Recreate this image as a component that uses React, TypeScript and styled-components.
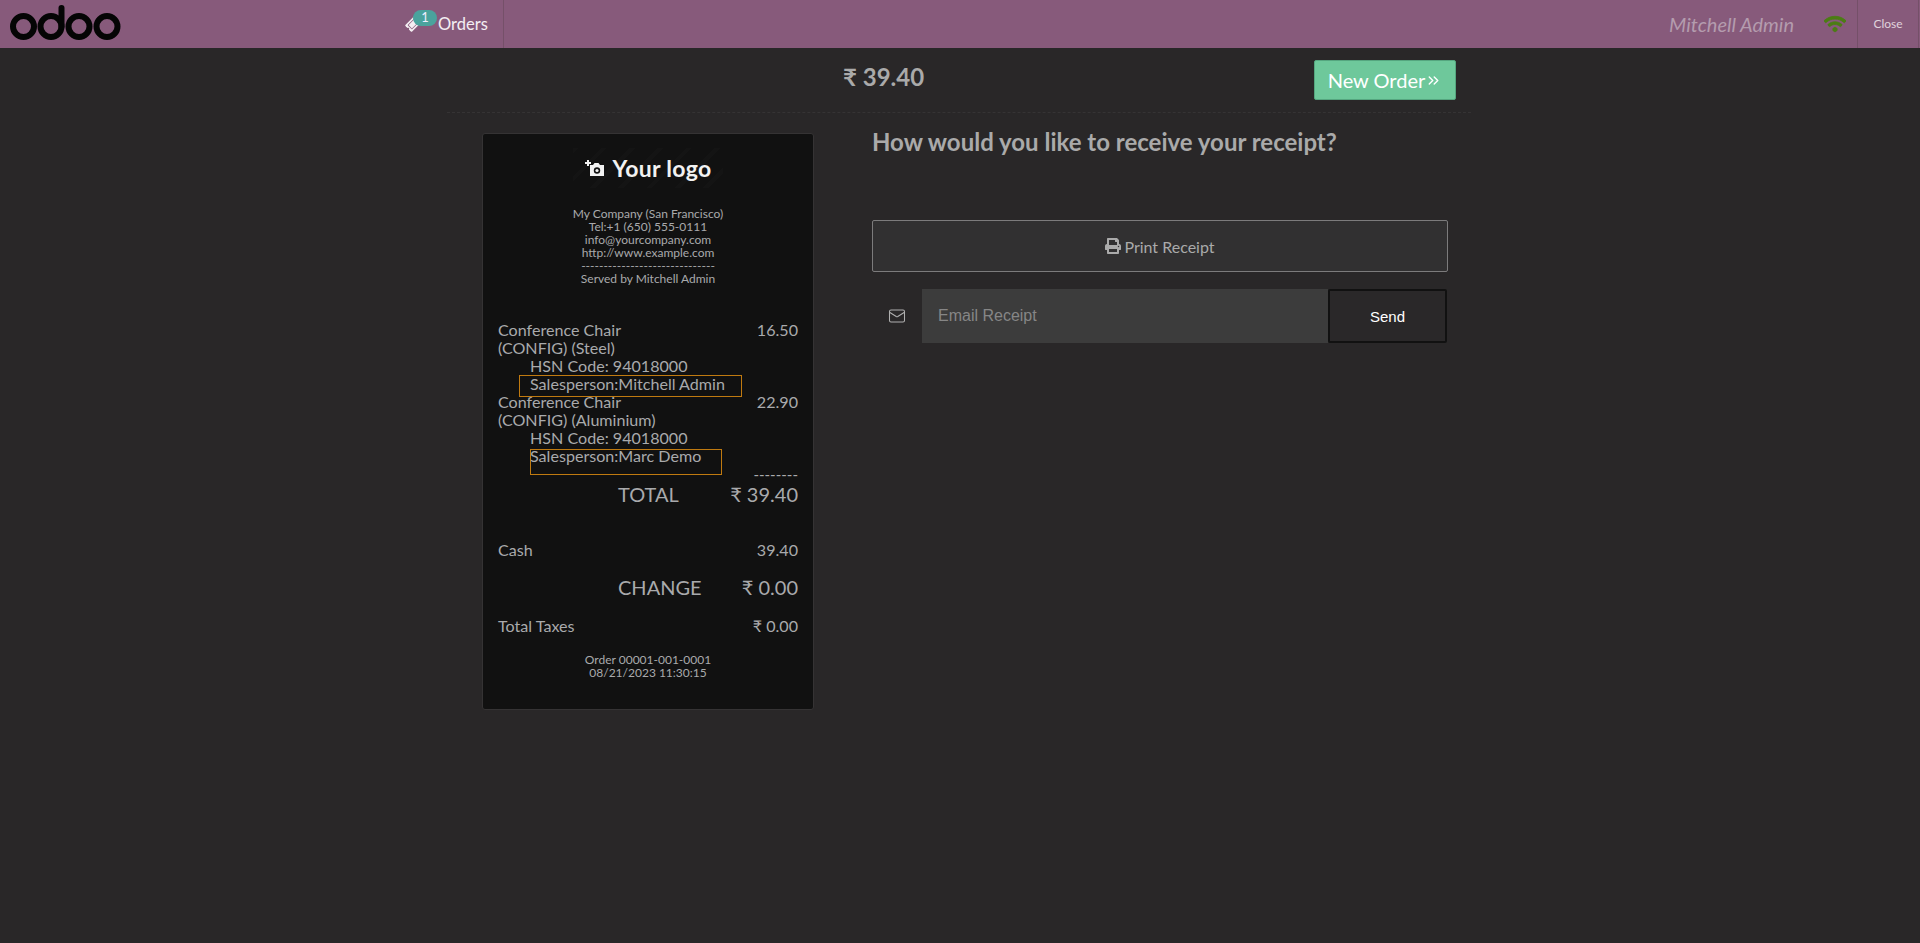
import { createGlobalStyle, styled } from "styled-components";
import { FaPrint, FaTicketAlt, FaWifi } from "react-icons/fa";
import { ChevronsRight, Mail } from "lucide-react";

const GlobalStyle = createGlobalStyle`
  html, body {
    margin: 0;
    padding: 0;
    height: 100%;
    background-color: #292728;
    font-family: Lato, "Liberation Sans", sans-serif;
    overflow: hidden;
  }
  * {
    box-sizing: border-box;
  }
`;

const Wrapper = styled.div`
  height: 943px;
  background-color: #292728;
  display: flex;
  flex-direction: column;
`;

const Navbar = styled.div`
  height: 48px;
  flex-shrink: 0;
  background-color: #875a7b;
  display: flex;
  align-items: stretch;
  color: white;
`;

const LogoBox = styled.div`
  width: 405px;
  padding: 5px 0 0 10px;
`;

const OrdersTab = styled.div`
  width: 99px;
  border-right: 1px solid #755069;
  position: relative;
  display: flex;
  align-items: center;
  gap: 18px;
  font-size: 16.5px;
  color: #f4eef2;
  svg {
    transform: rotate(-45deg);
    margin-left: 1px;
  }
`;

const Badge = styled.span`
  position: absolute;
  left: 8px;
  top: 10px;
  width: 24px;
  height: 16px;
  border-radius: 8px;
  background-color: #4aa39d;
  font-size: 13px;
  line-height: 14px;
  text-align: center;
  color: #eef;
`;

const Spacer = styled.div`
  flex: 1;
`;

const UserName = styled.div`
  align-self: center;
  font-style: italic;
  font-size: 20px;
  color: #b49cae;
  margin-right: 30px;
`;

const WifiBox = styled.div`
  width: 33px;
  display: flex;
  align-items: center;
  color: #4b7d13;
  font-size: 22px;
  svg {
    stroke: currentColor;
    stroke-width: 24px;
  }
`;

const CloseTab = styled.div`
  width: 62px;
  margin-right: 1px;
  border-left: 1px solid #755069;
  border-right: 1px solid #755069;
  display: flex;
  align-items: center;
  justify-content: center;
  font-size: 12px;
  color: #e0d4dd;
  padding-bottom: 1px;
`;

const Screen = styled.div`
  width: 1024px;
  margin-left: 447px;
`;

const TopBar = styled.div`
  height: 65px;
  border-bottom: 1px dashed #353334;
  display: flex;
  align-items: flex-start;
`;

const Amount = styled.div`
  margin-left: 396px;
  margin-top: 14px;
  font-size: 24px;
  line-height: 29px;
  font-weight: 700;
  color: #aaa;
`;

const NextButton = styled.div`
  margin-left: auto;
  margin-right: 15px;
  margin-top: 12px;
  width: 142px;
  height: 40px;
  background-color: #6ec89b;
  border: 1px solid #55a67f;
  border-radius: 2px;
  color: #fff;
  font-size: 20px;
  display: flex;
  align-items: center;
  justify-content: center;
`;

const Body = styled.div`
  display: flex;
  padding: 14px 0 0 35px;
  align-items: flex-start;
`;

const Receipt = styled.div`
  width: 332px;
  height: 577px;
  margin-top: 6px;
  background-color: #111;
  border: 1px solid #353334;
  border-radius: 3px;
  padding: 14px 15px 0;
  color: #a9aaac;
  font-size: 16.1px;
  line-height: 18px;
  flex-shrink: 0;
`;

const LogoPlaceholder = styled.div`
  width: 150px;
  height: 40px;
  margin: 0 auto 19px;
  display: flex;
  align-items: center;
  justify-content: center;
  gap: 8px;
  color: #f2f2f2;
  font-size: 23px;
  font-weight: 700;
  letter-spacing: 0.3px;
  background-image: repeating-linear-gradient(
    135deg,
    #141414 0 4px,
    #111 4px 20px
  );
`;

const Contact = styled.div`
  font-size: 12px;
  line-height: 13px;
  text-align: center;
  margin-bottom: 36px;
`;

const Line = styled.div`
  display: flex;
  justify-content: space-between;
  align-items: flex-start;
`;

const ProductName = styled.div`
  width: 170px;
`;

const SubLine = styled.div`
  padding-left: 32px;
  position: relative;
`;

const Highlight = styled.span<{ $left: number; $top: number; $width: number; $height: number }>`
  position: absolute;
  left: ${props => props.$left}px;
  top: ${props => props.$top}px;
  width: ${props => props.$width}px;
  height: ${props => props.$height}px;
  border: 1px solid #c07a10;
`;

const Dashes = styled.div`
  text-align: right;
  font-size: 15px;
  line-height: 18px;
  height: 18px;
`;

const BigLine = styled.div<{ $mt: number }>`
  display: flex;
  font-size: 20px;
  line-height: 24px;
  margin-top: ${props => props.$mt}px;
  padding-left: 120px;
  justify-content: space-between;
`;

const Spaced = styled(Line)<{ $mt: number }>`
  margin-top: ${props => props.$mt}px;
`;

const Footer = styled.div`
  font-size: 12px;
  line-height: 13px;
  text-align: center;
  margin-top: 18px;
`;

const Options = styled.div`
  margin-left: 58px;
  width: 576px;
`;

const Title = styled.h1`
  margin: 0;
  font-size: 24px;
  line-height: 29px;
  font-weight: 700;
  color: #aaa;
`;

const PrintButton = styled.div`
  margin-top: 64px;
  height: 52px;
  background-color: #313031;
  border: 1px solid #7c7b7c;
  border-radius: 2px;
  display: flex;
  align-items: center;
  justify-content: center;
  gap: 3px;
  font-size: 16px;
  color: #aaa;
`;

const EmailRow = styled.div`
  margin-top: 17px;
  display: flex;
  height: 54px;
`;

const MailIcon = styled.div`
  width: 50px;
  display: flex;
  align-items: center;
  justify-content: center;
  color: #b0b0b0;
`;

const EmailInput = styled.input`
  width: 406px;
  height: 54px;
  background-color: #3c3c3c;
  border: none;
  outline: none;
  padding: 0 16px;
  font-size: 16px;
  font-family: "Liberation Sans", Arial, sans-serif;
  &::placeholder {
    color: #868686;
    opacity: 1;
  }
`;

const SendButton = styled.div`
  width: 119px;
  height: 54px;
  background-color: #2a2829;
  border: 2px solid #111;
  border-radius: 2px;
  color: #fff;
  font-family: "Liberation Sans", Arial, sans-serif;
  font-size: 15px;
  display: flex;
  align-items: center;
  justify-content: center;
  padding-top: 1px;
`;

function OdooLogo() {
  return (
    <svg width="111" height="36" viewBox="0 0 111 36" fill="none" stroke="#050505" strokeWidth="6">
      <circle cx="13.5" cy="21.5" r="10.5" />
      <circle cx="41" cy="21.5" r="10.5" />
      <path d="M51.5 21.5V3" strokeLinecap="round" />
      <circle cx="69" cy="21.5" r="10.5" />
      <circle cx="97" cy="21.5" r="10.5" />
    </svg>
  );
}

function CameraPlus() {
  return (
    <svg width="20" height="18" viewBox="0 0 20 18" fill="#f2f2f2">
      <path d="M2 1h2v2h2v2H4v2H2V5H0V3h2z" />
      <path d="M5 6h3l1.5-2h4L15 6h4v11H5z" />
      <circle cx="12" cy="11.5" r="3.2" fill="#111" />
      <circle cx="12" cy="11.5" r="1.6" />
    </svg>
  );
}

function App() {
  return (
    <Wrapper>
      <GlobalStyle />
      <Navbar>
        <LogoBox>
          <OdooLogo />
        </LogoBox>
        <OrdersTab>
          <FaTicketAlt size={14} />
          <Badge>1</Badge>
          <span>Orders</span>
        </OrdersTab>
        <Spacer />
        <UserName>Mitchell Admin</UserName>
        <WifiBox>
          <FaWifi />
        </WifiBox>
        <CloseTab>Close</CloseTab>
      </Navbar>
      <Screen>
        <TopBar>
          <Amount>₹ 39.40</Amount>
          <NextButton>
            New Order
            <ChevronsRight size={17} strokeWidth={2} />
          </NextButton>
        </TopBar>
        <Body>
          <Receipt>
            <LogoPlaceholder>
              <CameraPlus />
              Your logo
            </LogoPlaceholder>
            <Contact>
              <div>My Company (San Francisco)</div>
              <div>Tel:+1 (650) 555-0111</div>
              <div>info@yourcompany.com</div>
              <div>http://www.example.com</div>
              <div>------------------------------</div>
              <div>Served by Mitchell Admin</div>
            </Contact>
            <Line>
              <ProductName>
                Conference Chair
                <br />
                (CONFIG) (Steel)
              </ProductName>
              <span>16.50</span>
            </Line>
            <SubLine>HSN Code: 94018000</SubLine>
            <SubLine>
              Salesperson:Mitchell Admin
              <Highlight $left={21} $top={0} $width={223} $height={22} />
            </SubLine>
            <Line>
              <ProductName>
                Conference Chair
                <br />
                (CONFIG) (Aluminium)
              </ProductName>
              <span>22.90</span>
            </Line>
            <SubLine>HSN Code: 94018000</SubLine>
            <SubLine>
              Salesperson:Marc Demo
              <Highlight $left={32} $top={2} $width={192} $height={26} />
            </SubLine>
            <Dashes>--------</Dashes>
            <BigLine $mt={-1}>
              <span>TOTAL</span>
              <span>₹ 39.40</span>
            </BigLine>
            <Spaced $mt={35}>
              <span>Cash</span>
              <span>39.40</span>
            </Spaced>
            <BigLine $mt={16}>
              <span>CHANGE</span>
              <span>₹ 0.00</span>
            </BigLine>
            <Spaced $mt={18}>
              <span>Total Taxes</span>
              <span>₹ 0.00</span>
            </Spaced>
            <Footer>
              <div>Order 00001-001-0001</div>
              <div>08/21/2023 11:30:15</div>
            </Footer>
          </Receipt>
          <Options>
            <Title>How would you like to receive your receipt?</Title>
            <PrintButton>
              <FaPrint size={16} />
              Print Receipt
            </PrintButton>
            <EmailRow>
              <MailIcon>
                <Mail size={18} strokeWidth={1.4} />
              </MailIcon>
              <EmailInput placeholder="Email Receipt" />
              <SendButton>Send</SendButton>
            </EmailRow>
          </Options>
        </Body>
      </Screen>
    </Wrapper>
  );
}

export default App;
